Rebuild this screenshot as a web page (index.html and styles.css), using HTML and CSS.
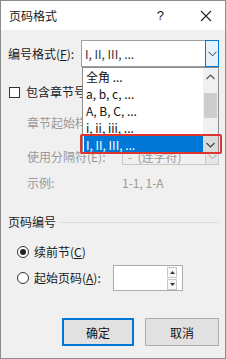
FILE: index.html
```html
<!DOCTYPE html>
<html lang="zh-CN">
    <head>
        <meta charset="UTF-8" />
        <title>页码格式</title>
        <meta name="viewport" content="width=device-width, initial-scale=1.0" />
        <link rel="stylesheet" href="styles.css">
    </head>
    <body>
        <div class="dialog">
            <div class="titlebar">
                <span class="title">页码格式</span>
                <span class="help">?</span>
                <svg class="close" width="12" height="12" viewBox="0 0 12 12">
                    <path d="M1 1 L11 11 M11 1 L1 11" stroke="#222" stroke-width="1.1" fill="none" />
                </svg>
            </div>

            <div class="content">
                <div class="row row-format">
                    <span class="label">编号格式(<u>F</u>):</span>
                    <div class="combo">
                        <span class="combo-text">I, II, III, ...</span>
                        <span class="combo-btn">
                            <svg width="9" height="6" viewBox="0 0 9 6">
                                <polyline points="0.5,0.8 4.5,4.8 8.5,0.8" stroke="#333" stroke-width="1" fill="none" />
                            </svg>
                        </span>

                        <div class="listbox">
                            <ul class="list-items">
                                <li>全角 ...</li>
                                <li>a, b, c, ...</li>
                                <li>A, B, C, ...</li>
                                <li>i, ii, iii, ...</li>
                                <li class="selected">I, II, III, ...</li>
                            </ul>
                            <div class="scrollbar">
                                <span class="scroll-btn">
                                    <svg width="9" height="6" viewBox="0 0 9 6">
                                        <polyline points="0.5,5 4.5,1 8.5,5" stroke="#555" stroke-width="1.2" fill="none" />
                                    </svg>
                                </span>
                                <span class="scroll-track">
                                    <span class="scroll-thumb"></span>
                                </span>
                                <span class="scroll-btn scroll-down">
                                    <svg width="9" height="6" viewBox="0 0 9 6">
                                        <polyline points="0.5,1 4.5,5 8.5,1" stroke="#444" stroke-width="1.2" fill="none" />
                                    </svg>
                                </span>
                            </div>
                        </div>
                        <div class="mark"></div>
                    </div>
                </div>

                <div class="row row-check">
                    <span class="checkbox"></span>
                    <span>包含章节号(N)</span>
                </div>

                <div class="row row-indent row-style">
                    <span class="muted">章节起始样式(P):</span>
                </div>

                <div class="row row-indent row-sep">
                    <span class="muted sep-label">使用分隔符(E):</span>
                    <div class="combo combo-disabled">
                        <span class="combo-text">-&nbsp;&nbsp;(连字符)</span>
                        <span class="combo-btn">
                            <svg width="9" height="6" viewBox="0 0 9 6">
                                <polyline points="0.5,0.8 4.5,4.8 8.5,0.8" stroke="#999" stroke-width="1" fill="none" />
                            </svg>
                        </span>
                    </div>
                </div>

                <div class="row row-indent row-example">
                    <span class="muted sep-label">示例:</span>
                    <span class="muted">1-1, 1-A</span>
                </div>

                <div class="group-head">
                    <span>页码编号</span>
                    <span class="group-line"></span>
                </div>

                <div class="row row-radio row-radio-first">
                    <span class="radio checked"></span>
                    <span>续前节(<u>C</u>)</span>
                </div>

                <div class="row row-radio row-radio-second">
                    <span class="radio"></span>
                    <span class="start-label">起始页码(<u>A</u>):</span>
                    <div class="spin">
                        <span class="spin-btns">
                            <span class="spin-btn">
                                <svg width="5" height="3" viewBox="0 0 5 3"><polygon points="0,3 2.5,0 5,3" fill="#333" /></svg>
                            </span>
                            <span class="spin-btn">
                                <svg width="5" height="3" viewBox="0 0 5 3"><polygon points="0,0 2.5,3 5,0" fill="#333" /></svg>
                            </span>
                        </span>
                    </div>
                </div>

                <div class="buttons">
                    <button class="btn btn-default">确定</button>
                    <button class="btn">取消</button>
                </div>
            </div>
        </div>
    </body>
</html>
```

FILE: styles.css
```css
* {
    margin: 0;
    padding: 0;
    box-sizing: border-box;
}

body {
    font-family: "Noto Sans CJK SC", "Noto Sans", sans-serif;
    font-size: 12px;
    color: #1a1a1a;
    background: #fff;
    width: 226px;
    height: 359px;
    overflow: hidden;
}

u {
    text-decoration: underline;
    text-underline-offset: 1px;
}

.dialog {
    width: 226px;
    height: 359px;
    border: 1px solid #8c8c8c;
    background: #f0f0f0;
    display: flex;
    flex-direction: column;
}

.titlebar {
    height: 29px;
    background: #fff;
    display: flex;
    align-items: center;
    padding-left: 8px;
    flex-shrink: 0;
}

.title {
    flex: 1;
    font-size: 12px;
    line-height: 16px;
}

.help {
    font-family: "Liberation Sans", sans-serif;
    font-size: 13px;
    margin-right: 36px;
}

.close {
    margin-right: 13px;
}

.content {
    flex: 1;
    padding: 10px 6px 0 7px;
    display: flex;
    flex-direction: column;
}

.row {
    display: flex;
    align-items: center;
    line-height: 16px;
}

.label {
    width: 73px;
}

/* combo boxes */

.combo {
    position: relative;
    flex: 1;
    height: 27px;
    background: #fff;
    border: 1px solid #a0a0a0;
    display: flex;
    align-items: center;
}

.combo-text {
    flex: 1;
    padding-left: 3px;
    color: #333;
}

.combo-btn {
    width: 14px;
    align-self: stretch;
    margin: -1px -1px -1px 0;
    background: #e5f1fb;
    border: 1px solid #0078d7;
    display: flex;
    align-items: center;
    justify-content: center;
}

.listbox {
    position: absolute;
    top: 26px;
    left: 0;
    right: -1px;
    height: 87px;
    background: #fff;
    border: 1px solid #8c8c8c;
    display: flex;
    z-index: 5;
}

.list-items {
    list-style: none;
    flex: 1;
    padding-left: 1px;
}

.list-items li {
    height: 17px;
    line-height: 17px;
    padding-left: 2px;
    color: #111;
}

.list-items li.selected {
    background: #0078d7;
    color: #fff;
}

.scrollbar {
    width: 15px;
    background: #f0f0f0;
    display: flex;
    flex-direction: column;
}

.scroll-btn {
    height: 17px;
    display: flex;
    align-items: center;
    justify-content: center;
}

.scroll-down {
    background: #dadada;
}

.scroll-track {
    flex: 1;
    padding-top: 8px;
}

.scroll-thumb {
    display: block;
    height: 25px;
    margin: 0 1px;
    background: #cdcdcd;
}

.mark {
    position: absolute;
    top: 93px;
    left: -2px;
    width: 142px;
    height: 20px;
    border: 2px solid #dc3530;
    border-radius: 2px;
    z-index: 6;
}

/* chapter options */

.row-check {
    margin-top: 17px;
    gap: 6px;
}

.checkbox {
    width: 11px;
    height: 11px;
    margin-left: 1px;
    border: 1px solid #333;
    background: #fff;
}

.row-indent {
    padding-left: 19px;
}

.row-style {
    margin-top: 15px;
}

.muted {
    color: #999;
}

.row-sep {
    margin-top: 18px;
}

.sep-label {
    width: 95px;
}

.combo-disabled {
    height: 16px;
    background: #f0f0f0;
    border-color: #c8c8c8;
}

.combo-disabled .combo-text {
    color: #999;
    padding-left: 5px;
}

.combo-disabled .combo-btn {
    background: #e6e6e6;
    border-color: #c8c8c8;
}

.row-example {
    margin-top: 10px;
}

/* page numbering */

.group-head {
    margin-top: 23px;
    display: flex;
    align-items: center;
    gap: 4px;
    line-height: 16px;
}

.group-line {
    flex: 1;
    height: 1px;
    background: #dcdcdc;
}

.row-radio {
    padding-left: 9px;
    gap: 5px;
}

.row-radio-first {
    margin-top: 14px;
}

.row-radio-second {
    margin-top: 5px;
}

.radio {
    width: 12px;
    height: 12px;
    border: 1px solid #333;
    border-radius: 50%;
    background: #fff;
    display: flex;
    align-items: center;
    justify-content: center;
}

.radio.checked::after {
    content: "";
    width: 6px;
    height: 6px;
    border-radius: 50%;
    background: #222;
}

.start-label {
    width: 74px;
}

.spin {
    width: 70px;
    height: 26px;
    background: #fff;
    border: 1px solid #adadad;
    display: flex;
    justify-content: flex-end;
    align-items: center;
    padding-right: 5px;
}

.spin-btns {
    display: flex;
    flex-direction: column;
    gap: 1px;
}

.spin-btn {
    width: 10px;
    height: 11px;
    border: 1px solid #c8c8c8;
    background: #f7f7f7;
    display: flex;
    align-items: center;
    justify-content: center;
}

/* buttons */

.buttons {
    margin-top: 27px;
    display: flex;
    justify-content: flex-end;
    gap: 11px;
}

.btn {
    width: 74px;
    height: 28px;
    background: #e1e1e1;
    border: 1px solid #adadad;
    font-family: inherit;
    font-size: 12px;
    color: #111;
}

.btn-default {
    width: 72px;
    border: 2px solid #0078d7;
}
```
